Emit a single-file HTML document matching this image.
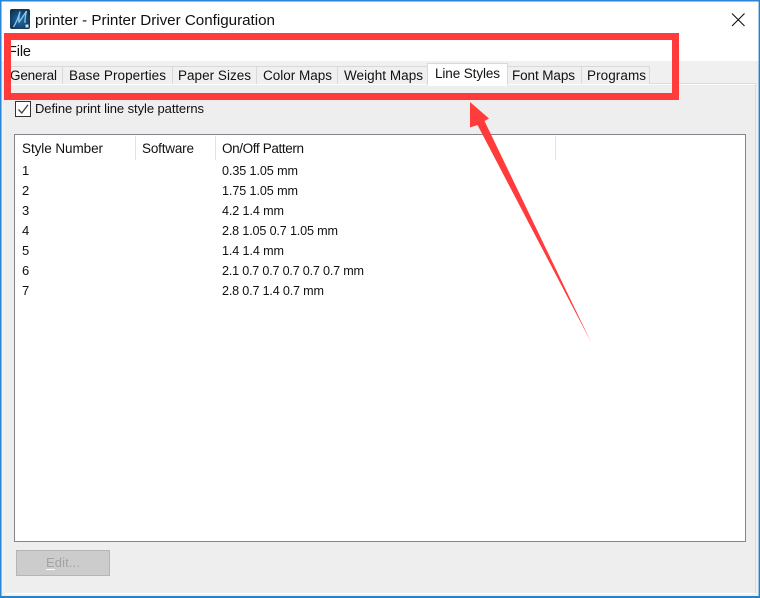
<!DOCTYPE html>
<html>
<head>
<meta charset="utf-8">
<title>printer - Printer Driver Configuration</title>
<style>
html,body{margin:0;padding:0;background:#fff;width:760px;height:598px;overflow:hidden}
svg{display:block}
text{font-family:"Liberation Sans",sans-serif;font-size:13px;fill:#111;white-space:pre}
text.t{font-size:13.5px}
text.r{font-size:12.6px}
</style>
</head>
<body>
<svg width="760" height="598" viewBox="0 0 760 598" xmlns="http://www.w3.org/2000/svg">
<defs>
<radialGradient id="ic" cx="50%" cy="55%" r="65%">
<stop offset="0" stop-color="#1f6ea8"/>
<stop offset="1" stop-color="#0f2f4c"/>
</radialGradient>
</defs>
<rect width="760" height="598" fill="#f0f0f0"/>
<rect x="1" y="1" width="758" height="60" fill="#fff"/>
<!-- window border -->
<rect x="0" y="0" width="760" height="1.5" fill="#2b86d6"/>
<rect x="0" y="0" width="1.5" height="598" fill="#2b86d6"/>
<rect x="758.6" y="0" width="1.4" height="598" fill="#2b7fc4"/>
<rect x="0" y="596" width="760" height="2" fill="#2b7fc4"/>
<!-- panel -->
<rect x="5" y="83" width="751" height="511" fill="#fff"/>
<rect x="5" y="83" width="751" height="1" fill="#dcdcdc"/>
<rect x="755" y="83" width="1" height="510" fill="#dcdcdc"/>
<rect x="5" y="85" width="750" height="508" fill="#eeeeee"/>
<!-- app icon -->
<rect x="10" y="9" width="20" height="20" rx="2" fill="url(#ic)"/>
<path d="M13.500 27 C16 23 18.500 17 20 11.500 C19 15 18.500 19 19 22 C21.500 19 24 15 26.500 11 C25.500 15 24.800 19 25 23" fill="none" stroke="#8cc8ef" stroke-width="1.300"/>
<rect x="25.500" y="24.500" width="3" height="3" fill="#d5dde3"/>
<!-- title -->
<text x="35" y="25" textLength="240" lengthAdjust="spacing" style="font-size:15.200px">printer - Printer Driver Configuration</text>
<!-- close -->
<path d="M732 13.500 L744.500 26 M744.500 13.500 L732 26" stroke="#111" stroke-width="1.100" fill="none"/>
<!-- menu -->
<text x="8" y="56" textLength="23" lengthAdjust="spacing" style="font-size:14.500px">File</text>
<!-- tabs -->
<g fill="#f0f0f0" stroke="#d9d9d9" stroke-width="1">
<path d="M4.500 84 V66.500 H62.500 V84"/>
<path d="M62.500 84 V66.500 H172.500 V84"/>
<path d="M172.500 84 V66.500 H256.500 V84"/>
<path d="M256.500 84 V66.500 H337.500 V84"/>
<path d="M337.500 84 V66.500 H427.500 V84"/>
<path d="M507.500 84 V66.500 H581.500 V84"/>
<path d="M581.500 84 V66.500 H649.500 V84"/>
</g>
<path d="M427.500 85 V63.500 H507.500 V85" fill="#fff" stroke="#d9d9d9"/>
<rect x="428" y="83" width="79" height="3" fill="#fff"/>
<text class="t" x="10" y="80" textLength="47" lengthAdjust="spacing">General</text>
<text class="t" x="69" y="80" textLength="97" lengthAdjust="spacing">Base Properties</text>
<text class="t" x="178" y="80" textLength="73" lengthAdjust="spacing">Paper Sizes</text>
<text class="t" x="263" y="80" textLength="69" lengthAdjust="spacing">Color Maps</text>
<text class="t" x="344" y="80" textLength="79" lengthAdjust="spacing">Weight Maps</text>
<text class="t" x="435" y="78" textLength="65" lengthAdjust="spacing">Line Styles</text>
<text class="t" x="512" y="80" textLength="63" lengthAdjust="spacing">Font Maps</text>
<text class="t" x="587" y="80" textLength="59" lengthAdjust="spacing">Programs</text>
<!-- checkbox -->
<rect x="15.500" y="101.500" width="15" height="15" fill="#fff" stroke="#333"/>
<path d="M18.500 109.500 L21.800 113 L28 104.800" fill="none" stroke="#444" stroke-width="1.300"/>
<text x="35" y="113" textLength="169" lengthAdjust="spacing">Define print line style patterns</text>
<!-- list -->
<rect x="14.500" y="134.500" width="731" height="407" fill="#fff" stroke="#82858c"/>
<g fill="#e3e3e3">
<rect x="135" y="136" width="1" height="24"/>
<rect x="215" y="136" width="1" height="24"/>
<rect x="555" y="136" width="1" height="24"/>
</g>
<text class="t" x="22" y="153" textLength="81" lengthAdjust="spacing">Style Number</text>
<text class="t" x="142" y="153" textLength="52" lengthAdjust="spacing">Software</text>
<text class="t" x="222" y="153" textLength="82" lengthAdjust="spacing">On/Off Pattern</text>
<text x="22" y="175">1</text>
<text x="22" y="195">2</text>
<text x="22" y="215">3</text>
<text x="22" y="235">4</text>
<text x="22" y="255">5</text>
<text x="22" y="275">6</text>
<text x="22" y="295">7</text>
<text class="r" x="222" y="175" textLength="76" lengthAdjust="spacing">0.35 1.05 mm</text>
<text class="r" x="222" y="195" textLength="76" lengthAdjust="spacing">1.75 1.05 mm</text>
<text class="r" x="222" y="215" textLength="62" lengthAdjust="spacing">4.2 1.4 mm</text>
<text class="r" x="222" y="235" textLength="116" lengthAdjust="spacing">2.8 1.05 0.7 1.05 mm</text>
<text class="r" x="222" y="255" textLength="62" lengthAdjust="spacing">1.4 1.4 mm</text>
<text class="r" x="222" y="275" textLength="142" lengthAdjust="spacing">2.1 0.7 0.7 0.7 0.7 0.7 mm</text>
<text class="r" x="222" y="295" textLength="102" lengthAdjust="spacing">2.8 0.7 1.4 0.7 mm</text>
<!-- edit button -->
<rect x="16.500" y="550.500" width="93" height="25" fill="#cccccc" stroke="#b5b5b5"/>
<text x="46" y="567" textLength="34" lengthAdjust="spacing" style="fill:#a3a3a3">Edit...</text>
<rect x="46" y="569" width="9" height="1" fill="#fff"/>
<!-- annotations -->
<rect x="7.500" y="36.500" width="668" height="60" fill="none" stroke="#ff3b3b" stroke-width="7"/>
<polygon points="470,102 489,118.500 484.500,121 591,342 477.500,125 470,127.500" fill="#ff3b3b"/>
</svg>
</body>
</html>
